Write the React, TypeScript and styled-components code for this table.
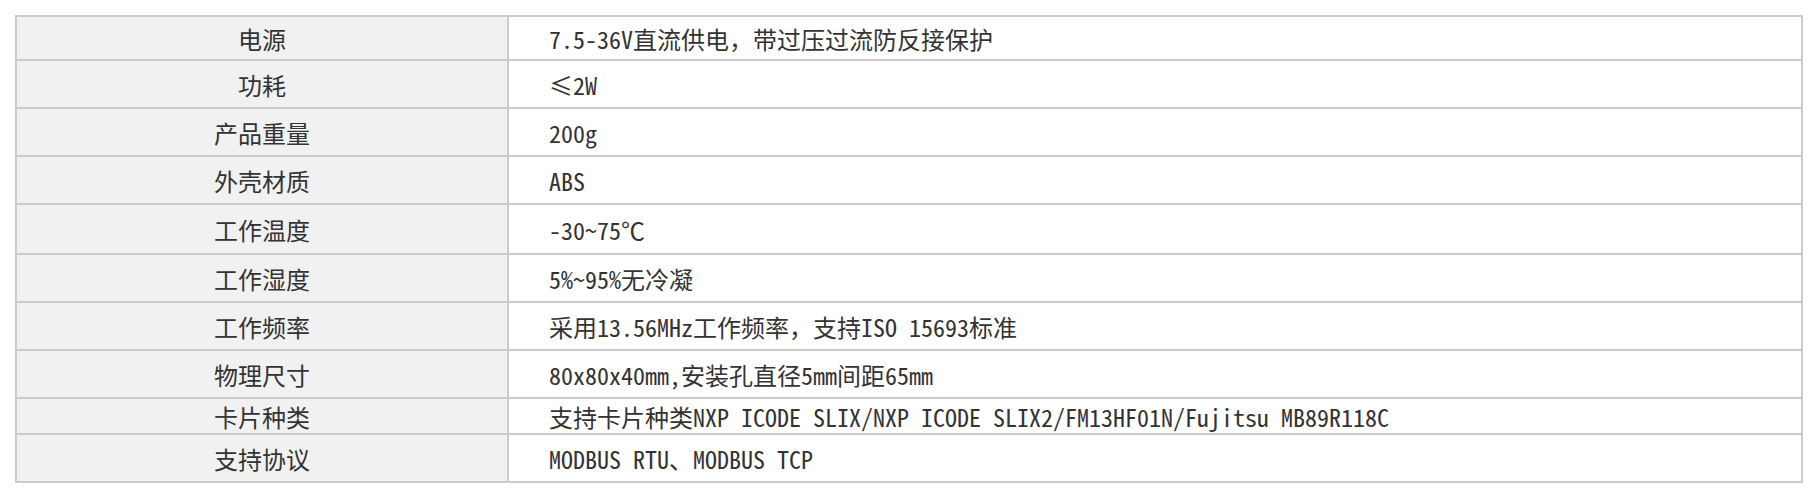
import React from "react";
import styled, { createGlobalStyle } from "styled-components";

// Spec rows: label, value, row content height
const SPECS: { label: string; value: string; h: number }[] = [
  { label: "电源", value: "7.5-36V直流供电，带过压过流防反接保护", h: 42 },
  { label: "功耗", value: "≤2W", h: 46 },
  { label: "产品重量", value: "200g", h: 46 },
  { label: "外壳材质", value: "ABS", h: 46 },
  { label: "工作温度", value: "-30~75℃", h: 48 },
  { label: "工作湿度", value: "5%~95%无冷凝", h: 46 },
  { label: "工作频率", value: "采用13.56MHz工作频率，支持ISO 15693标准", h: 46 },
  { label: "物理尺寸", value: "80x80x40mm,安装孔直径5mm间距65mm", h: 46 },
  { label: "卡片种类", value: "支持卡片种类NXP ICODE SLIX/NXP ICODE SLIX2/FM13HF01N/Fujitsu MB89R118C", h: 34 },
  { label: "支持协议", value: "MODBUS RTU、MODBUS TCP", h: 46 },
];

const GlobalStyle = createGlobalStyle`
  html, body {
    margin: 0;
    padding: 0;
    background: #ffffff;
  }
`;

const Page = styled.div`
  padding: 15px 0 0 15px;
`;

const SpecTable = styled.div`
  display: grid;
  grid-template-columns: 490px 1292px;
  gap: 2px;
  width: fit-content;
  border: 2px solid #cbcbcb;
  background: #cbcbcb;
  font-family: "Noto Sans Mono CJK SC", "Noto Sans CJK SC", monospace;
  font-size: 24px;
  color: #333333;
`;

const Cell = styled.div<{ $h: number }>`
  height: ${({ $h }) => $h}px;
  display: flex;
  align-items: center;
  white-space: nowrap;
`;

const LabelCell = styled(Cell)`
  justify-content: center;
  background: #f1f1f1;
`;

const ValueCell = styled(Cell)`
  background: #ffffff;
  padding-left: 40px;
`;

export default function App() {
  return (
    <Page>
      <GlobalStyle />
      <SpecTable>
        {SPECS.map((row) => (
          <React.Fragment key={row.label}>
            <LabelCell $h={row.h}>{row.label}</LabelCell>
            <ValueCell $h={row.h}>{row.value}</ValueCell>
          </React.Fragment>
        ))}
      </SpecTable>
    </Page>
  );
}
